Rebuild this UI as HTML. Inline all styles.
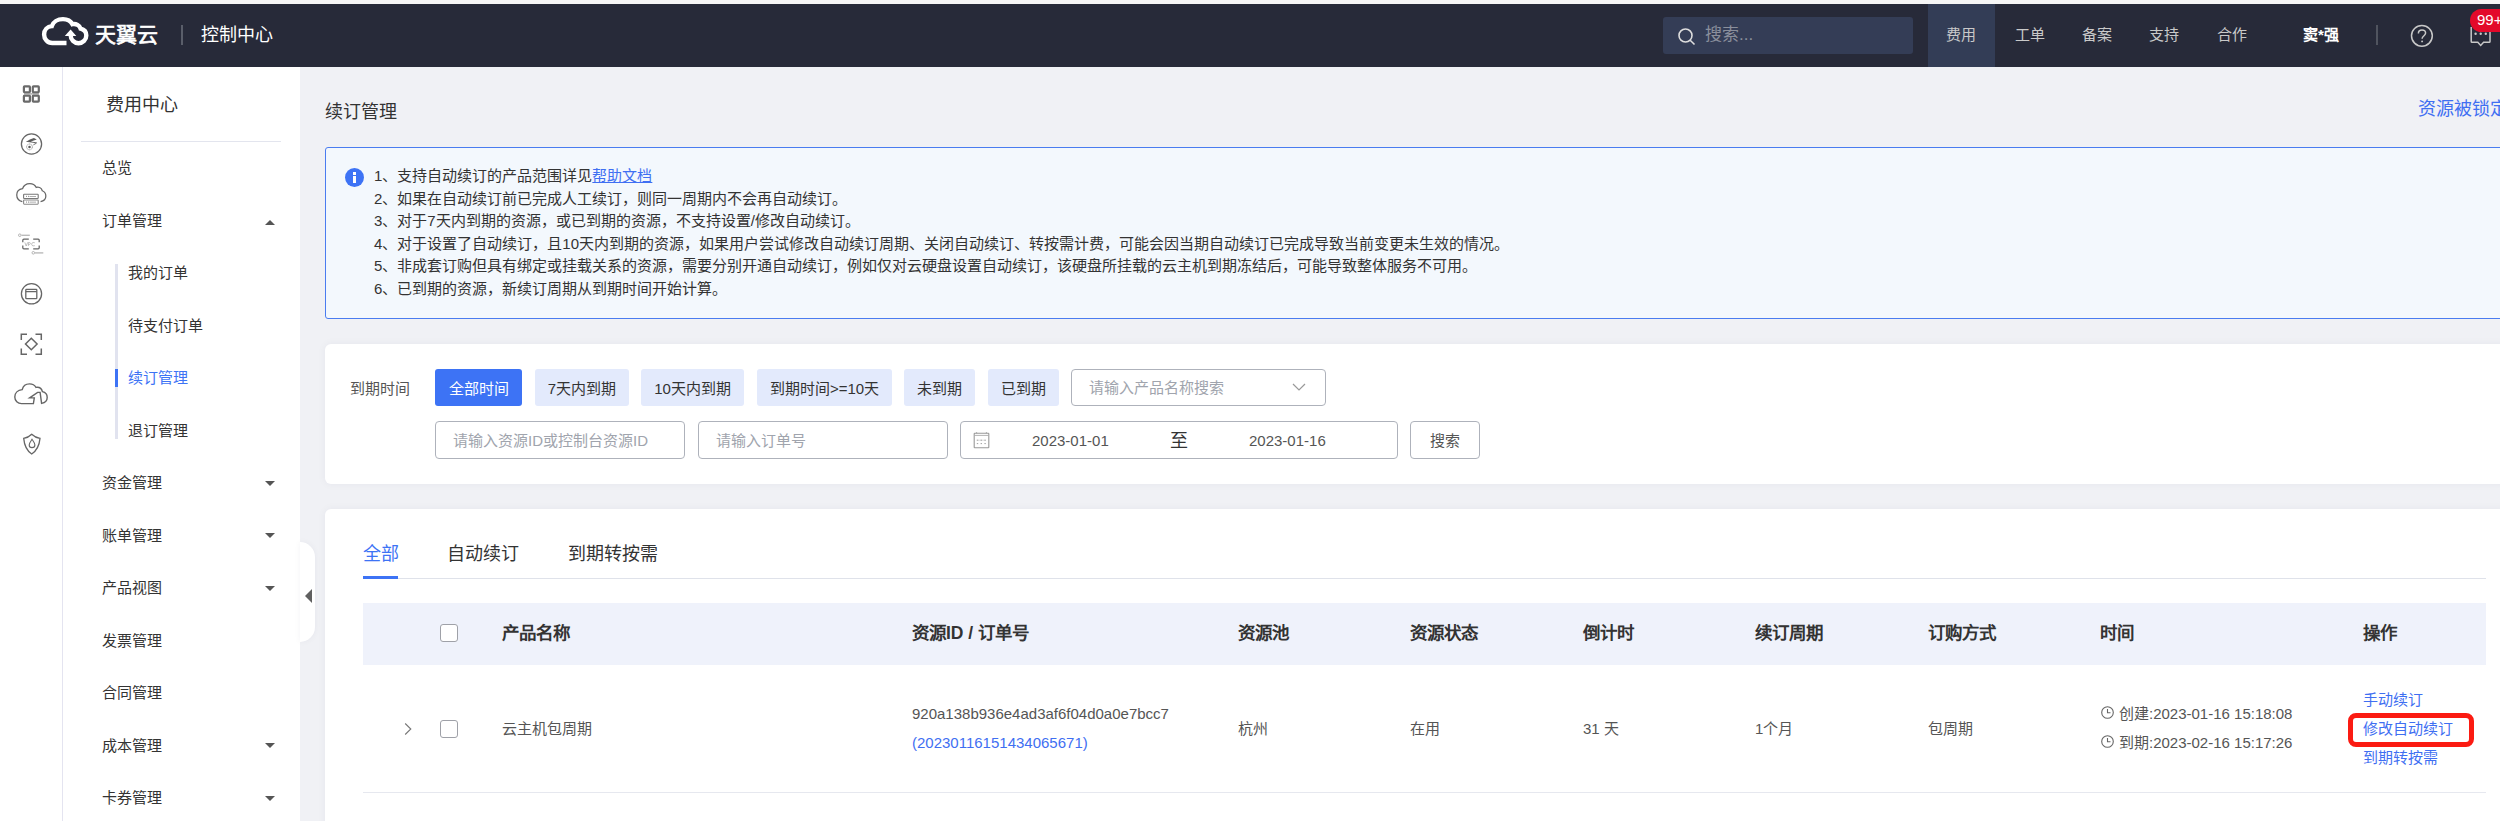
<!DOCTYPE html>
<html lang="zh-CN"><head><meta charset="utf-8">
<style>
*{box-sizing:border-box;margin:0;padding:0}
html,body{width:2500px;height:821px;overflow:hidden;background:#f0f1f5;font-family:"Liberation Sans",sans-serif;color:#333}
.a{position:absolute;white-space:nowrap}
#strip{left:0;top:0;width:2500px;height:4px;background:#f6f6f6}
#hdr{left:0;top:4px;width:2500px;height:63px;background:#272a39}
#iconbar{left:0;top:67px;width:63px;height:754px;background:#fff;border-right:1px solid #e4e4f0}
#side{left:63px;top:67px;width:237px;height:754px;background:#fff}
.nav{font-size:15px;line-height:20px;color:#c9c9c9}
.menu{font-size:15px;line-height:20px;color:#333}
.caret{width:0;height:0;border-left:5px solid transparent;border-right:5px solid transparent;border-top:5px solid #555}
.caretup{width:0;height:0;border-left:5px solid transparent;border-right:5px solid transparent;border-bottom:5px solid #555}
.card{background:#fff;border-radius:6px;box-shadow:0 0 8px rgba(30,40,80,0.05)}
.fbtn{height:37px;top:369px;border-radius:3px;background:#e3eafc;font-size:15px;line-height:39px;text-align:center;color:#333}
.inp{height:38px;top:421px;border:1px solid #aeb2bb;border-radius:4px;background:#fff;font-size:15px;line-height:38px;color:#a0a4ad}
.th{font-size:17.5px;font-weight:bold;line-height:20px;color:#333;top:623px}
.td{font-size:15px;line-height:20px;color:#555}
.link{color:#3f6ff2}
</style></head><body>
<div id="strip" class="a"></div>
<div id="hdr" class="a">
</div>
<div id="iconbar" class="a"></div>
<div id="side" class="a"></div>

<!-- header content -->
<svg class="a" style="left:0;top:0" width="100" height="60" viewBox="0 0 100 60"><path d="M66.5 43 H52.2 C47.6 43 44.1 39.2 44.1 34.5 C44.1 29.9 47.4 26.4 51.8 26.1 C53.2 21.9 57.7 19.1 63 19.1 C67.4 19.1 70.8 21.2 72.4 24.2 C76 23.4 79.6 25.4 80.6 28.6 C84 29.4 86.3 32 86.3 35.4 A7.8 7.8 0 0 1 70.7 35.4" fill="none" stroke="#fff" stroke-width="4.4"/><path d="M70.6 29.4 L64.8 36 L76.3 36 Z" fill="#fff"/></svg>
<div class="a" style="left:95px;top:23px;font-size:21px;line-height:24px;color:#fff;-webkit-text-stroke:0.6px #fff">天翼云</div>
<div class="a" style="left:181px;top:25px;width:2px;height:20px;background:#5a5e6a"></div>
<div class="a" style="left:201px;top:24px;font-size:18px;line-height:22px;color:#fff">控制中心</div>

<div class="a" style="left:1663px;top:17px;width:250px;height:37px;background:#343d56;border-radius:3px"></div>
<div class="a" style="left:1678px;top:28px;width:18px;height:18px">
<svg width="18" height="18" viewBox="0 0 18 18"><circle cx="7.5" cy="7.5" r="6.5" fill="none" stroke="#ddd" stroke-width="1.6"/><path d="M12.2 12.2 L16.5 16.5" stroke="#ddd" stroke-width="1.6"/></svg>
</div>
<div class="a" style="left:1705px;top:24px;font-size:17px;line-height:22px;color:#8a8f9c">搜索...</div>
<div class="a" style="left:1928px;top:4px;width:67px;height:63px;background:#333d56"></div>
<div class="a nav" style="left:1946px;top:25px">费用</div>
<div class="a nav" style="left:2015px;top:25px">工单</div>
<div class="a nav" style="left:2082px;top:25px">备案</div>
<div class="a nav" style="left:2149px;top:25px">支持</div>
<div class="a nav" style="left:2217px;top:25px">合作</div>
<div class="a nav" style="left:2303px;top:25px;color:#fff;font-weight:bold">窦*强</div>
<div class="a" style="left:2376px;top:25px;width:2px;height:20px;background:#50545f"></div>
<svg class="a" style="left:2400px;top:0" width="100" height="60" viewBox="0 0 100 60">
<circle cx="21.9" cy="35.8" r="10.4" fill="none" stroke="#c8c8c8" stroke-width="1.5"/>
<path d="M18.4 33.4 C18.4 31.3 20 30 22 30 C24 30 25.6 31.3 25.6 33.1 C25.6 35.6 22.1 35.9 22.1 38.8" fill="none" stroke="#c8c8c8" stroke-width="1.5"/>
<circle cx="22.1" cy="41.4" r="0.95" fill="#c8c8c8"/>
<path d="M71.2 27 V41.5 Q71.2 42.3 72 42.3 H77.8 L80.7 45.4 L83.6 42.3 H89.2 Q90 42.3 90 41.5 V27" fill="none" stroke="#c8c8c8" stroke-width="1.5"/>
<circle cx="75.6" cy="33.7" r="1.2" fill="#c8c8c8"/><circle cx="80.7" cy="33.7" r="1.2" fill="#c8c8c8"/><circle cx="85.8" cy="33.7" r="1.2" fill="#c8c8c8"/>
</svg>
<div class="a" style="left:2470px;top:9px;width:50px;height:23px;background:#e3092a;border-radius:12px"></div>
<div class="a" style="left:2477px;top:9px;color:#fff;font-size:15px;line-height:21px">99+</div>

<!-- sidebar -->
<div class="a" style="left:106px;top:93.5px;font-size:18px;line-height:22px;color:#333">费用中心</div>
<div class="a" style="left:81px;top:141px;width:200px;height:1px;background:#e3e5ee"></div>
<div class="a menu" style="left:102px;top:158.2px">总览</div>
<div class="a menu" style="left:102px;top:210.7px">订单管理</div>
<div class="a caretup" style="left:265px;top:220px"></div>
<div class="a" style="left:115px;top:264px;width:3px;height:175px;background:#e1e3ef"></div>
<div class="a" style="left:115px;top:369px;width:3px;height:18px;background:#3d73f5"></div>
<div class="a menu" style="left:128px;top:263.2px">我的订单</div>
<div class="a menu" style="left:128px;top:315.7px">待支付订单</div>
<div class="a menu" style="left:128px;top:368.2px;color:#3d73f5">续订管理</div>
<div class="a menu" style="left:128px;top:420.7px">退订管理</div>
<div class="a menu" style="left:102px;top:473.2px">资金管理</div>
<div class="a caret" style="left:265px;top:480.7px"></div>
<div class="a menu" style="left:102px;top:525.7px">账单管理</div>
<div class="a caret" style="left:265px;top:533.2px"></div>
<div class="a menu" style="left:102px;top:578.2px">产品视图</div>
<div class="a caret" style="left:265px;top:585.7px"></div>
<div class="a menu" style="left:102px;top:630.7px">发票管理</div>
<div class="a menu" style="left:102px;top:683.2px">合同管理</div>
<div class="a menu" style="left:102px;top:735.7px">成本管理</div>
<div class="a caret" style="left:265px;top:743.2px"></div>
<div class="a menu" style="left:102px;top:788.2px">卡券管理</div>
<div class="a caret" style="left:265px;top:795.7px"></div>

<!-- collapse tab -->
<div class="a" style="left:300px;top:542px;width:15px;height:100px;background:#fff;border-radius:0 15px 15px 0;box-shadow:0 0 6px rgba(30,40,80,0.05)"></div>
<div class="a" style="left:305px;top:589px;width:0;height:0;border-top:7px solid transparent;border-bottom:7px solid transparent;border-right:7px solid #606060"></div>

<!-- content -->
<div class="a" style="left:325px;top:100.5px;font-size:18px;line-height:22px;color:#333">续订管理</div>
<div class="a link" style="left:2418px;top:97.5px;font-size:18px;line-height:22px">资源被锁定</div>

<div class="a" style="left:325px;top:147px;width:2200px;height:172px;background:#f3f8fd;border:1px solid #4a7cf0;border-radius:3px"></div>
<div class="a" style="left:345px;top:168px;width:19px;height:19px;border-radius:50%;background:#3d73f5"></div>
<div class="a" style="left:353px;top:172px;width:3px;height:3px;background:#fff"></div>
<div class="a" style="left:353px;top:176px;width:3px;height:7px;background:#fff"></div>
<div class="a" style="left:374px;top:165px;font-size:15px;line-height:22.5px;color:#333">1、支持自动续订的产品范围详见<span class="link" style="text-decoration:underline">帮助文档</span><br>2、如果在自动续订前已完成人工续订，则同一周期内不会再自动续订。<br>3、对于7天内到期的资源，或已到期的资源，不支持设置/修改自动续订。<br>4、对于设置了自动续订，且10天内到期的资源，如果用户尝试修改自动续订周期、关闭自动续订、转按需计费，可能会因当期自动续订已完成导致当前变更未生效的情况。<br>5、非成套订购但具有绑定或挂载关系的资源，需要分别开通自动续订，例如仅对云硬盘设置自动续订，该硬盘所挂载的云主机到期冻结后，可能导致整体服务不可用。<br>6、已到期的资源，新续订周期从到期时间开始计算。</div>

<!-- filter card -->
<div class="a card" style="left:325px;top:344px;width:2200px;height:140px"></div>
<div class="a" style="left:350px;top:379px;font-size:15px;line-height:20px;color:#555">到期时间</div>
<div class="a fbtn" style="left:435px;width:87px;background:#3d73f5;color:#fff">全部时间</div>
<div class="a fbtn" style="left:535px;width:94px">7天内到期</div>
<div class="a fbtn" style="left:641px;width:103px">10天内到期</div>
<div class="a fbtn" style="left:757px;width:135px">到期时间&gt;=10天</div>
<div class="a fbtn" style="left:904px;width:71px">未到期</div>
<div class="a fbtn" style="left:988px;width:71px">已到期</div>
<div class="a inp" style="left:1071px;top:369px;width:255px;height:37px;padding-left:17px;line-height:36px">请输入产品名称搜索</div>
<div class="a" style="left:1292px;top:380px;width:14px;height:14px">
<svg width="14" height="14" viewBox="0 0 14 14"><path d="M1 4 L7 10 L13 4" fill="none" stroke="#999" stroke-width="1.2"/></svg>
</div>
<div class="a inp" style="left:435px;width:250px;padding-left:17px">请输入资源ID或控制台资源ID</div>
<div class="a inp" style="left:698px;width:250px;padding-left:17px">请输入订单号</div>
<div class="a inp" style="left:960px;width:438px;color:#555"></div>
<svg class="a" style="left:973px;top:431px" width="17" height="18" viewBox="0 0 17 18"><rect x="1.2" y="2.3" width="14.6" height="14.4" rx="0.5" fill="none" stroke="#999" stroke-width="1.1"/><path d="M1.2 4.4 H15.8 M3.6 1 V3 M13.4 1 V3" stroke="#aaa" stroke-width="0.9"/><g fill="#aaa"><rect x="3.8" y="8.7" width="1.4" height="1.1"/><rect x="7.6" y="8.7" width="1.4" height="1.1"/><rect x="11.4" y="8.7" width="1.4" height="1.1"/><rect x="3.8" y="12" width="1.4" height="1.1"/><rect x="7.6" y="12" width="1.4" height="1.1"/><rect x="11.4" y="12" width="1.4" height="1.1"/></g><path d="M3.8 9.2 H12.8" stroke="#bbb" stroke-width="0.5"/></svg>
<div class="a" style="left:1032px;top:431px;font-size:15px;line-height:20px;color:#555">2023-01-01</div>
<div class="a" style="left:1170px;top:430px;font-size:18px;line-height:22px;color:#333">至</div>
<div class="a" style="left:1249px;top:431px;font-size:15px;line-height:20px;color:#555">2023-01-16</div>
<div class="a inp" style="left:1410px;width:70px;text-align:center;color:#555">搜索</div>

<!-- table card -->
<div class="a card" style="left:325px;top:509px;width:2200px;height:330px"></div>
<div class="a" style="left:363px;top:543px;font-size:18px;line-height:22px;color:#3d73f5">全部</div>
<div class="a" style="left:447px;top:543px;font-size:18px;line-height:22px;color:#333">自动续订</div>
<div class="a" style="left:568px;top:543px;font-size:18px;line-height:22px;color:#333">到期转按需</div>
<div class="a" style="left:363px;top:578px;width:2123px;height:1px;background:#dfe2ea"></div>
<div class="a" style="left:363px;top:576px;width:35px;height:3px;background:#3d73f5"></div>

<div class="a" style="left:363px;top:603px;width:2123px;height:62px;background:#eff2fb"></div>
<div class="a" style="left:440px;top:624px;width:18px;height:18px;border:1px solid #9fa1a8;border-radius:3px;background:#fff"></div>
<div class="a th" style="left:502px">产品名称</div>
<div class="a th" style="left:912px">资源ID / 订单号</div>
<div class="a th" style="left:1238px">资源池</div>
<div class="a th" style="left:1410px">资源状态</div>
<div class="a th" style="left:1583px">倒计时</div>
<div class="a th" style="left:1755px">续订周期</div>
<div class="a th" style="left:1928px">订购方式</div>
<div class="a th" style="left:2100px">时间</div>
<div class="a th" style="left:2363px">操作</div>

<div class="a" style="left:403px;top:722px;width:10px;height:14px">
<svg width="10" height="14" viewBox="0 0 10 14"><path d="M2.2 1.5 L7.8 7 L2.2 12.5" fill="none" stroke="#777" stroke-width="1.1"/></svg>
</div>
<div class="a" style="left:440px;top:720px;width:18px;height:18px;border:1px solid #9fa1a8;border-radius:3px;background:#fff"></div>
<div class="a td" style="left:502px;top:719px">云主机包周期</div>
<div class="a td" style="left:912px;top:704px">920a138b936e4ad3af6f04d0a0e7bcc7</div>
<div class="a td link" style="left:912px;top:733px">(20230116151434065671)</div>
<div class="a td" style="left:1238px;top:719px">杭州</div>
<div class="a td" style="left:1410px;top:719px">在用</div>
<div class="a td" style="left:1583px;top:719px">31 天</div>
<div class="a td" style="left:1755px;top:719px">1个月</div>
<div class="a td" style="left:1928px;top:719px">包周期</div>
<div class="a" style="left:2101px;top:705px;width:13px;height:13px">
<svg width="13" height="13" viewBox="0 0 13 13"><circle cx="6.5" cy="6.5" r="5.8" fill="none" stroke="#666" stroke-width="1.1"/><path d="M6.5 3 V6.8 H9.5" fill="none" stroke="#666" stroke-width="1.1"/></svg>
</div>
<div class="a td" style="left:2119px;top:704px">创建:2023-01-16 15:18:08</div>
<div class="a" style="left:2101px;top:734px;width:13px;height:13px">
<svg width="13" height="13" viewBox="0 0 13 13"><circle cx="6.5" cy="6.5" r="5.8" fill="none" stroke="#666" stroke-width="1.1"/><path d="M6.5 3 V6.8 H9.5" fill="none" stroke="#666" stroke-width="1.1"/></svg>
</div>
<div class="a td" style="left:2119px;top:733px">到期:2023-02-16 15:17:26</div>
<div class="a td link" style="left:2363px;top:690px">手动续订</div>
<div class="a td link" style="left:2363px;top:719px">修改自动续订</div>
<div class="a td link" style="left:2363px;top:748px">到期转按需</div>
<div class="a" style="left:2348px;top:713px;width:126px;height:34px;border:5px solid #fb1b12;border-radius:8px"></div>
<div class="a" style="left:363px;top:792px;width:2123px;height:1px;background:#e6e8ef"></div>

<!-- icon bar icons -->
<svg class="a" style="left:0;top:0" width="63" height="470" viewBox="0 0 63 470">
<g fill="none" stroke="#6a6a6a" stroke-width="2.2"><rect x="23.9" y="86.3" width="6" height="6" rx="0.7"/><rect x="32.8" y="86.3" width="6" height="6" rx="0.7"/><rect x="23.9" y="95.6" width="6" height="6" rx="0.7"/><rect x="32.8" y="95.6" width="6" height="6" rx="0.7"/></g><path d="M24 93.9 H39" stroke="#999" stroke-width="1.2"/>
<g fill="none" stroke="#666" stroke-width="1.3">
<circle cx="31.5" cy="144" r="10.1"/>
<circle cx="31.5" cy="293.8" r="10.1"/>
<rect x="25.8" y="289.4" width="11" height="9.3" rx="0.6"/>
<path d="M25.8 291.6 H36.8"/>
<path d="M7 19.5 C3.5 18.5 1.2 15.8 1.2 12.6 C1.2 9.3 3.6 6.7 7.2 6.2 C8.3 3 11.3 1 14.8 1 C17.6 1 20.2 2.5 21.5 4.9 C24.3 4.2 27 5.8 27.8 8.3 C30.2 9.2 31.5 11.3 31.5 13.8 C31.5 16.8 29.2 19 26 19.5" transform="translate(15.6,182.6) scale(0.96,0.98)"/>
<rect x="23.6" y="194.3" width="14.6" height="4.2" rx="0.6" stroke="#777" stroke-width="1.1"/>
<rect x="23.6" y="200" width="14.6" height="4.2" rx="0.6" stroke="#888" stroke-width="1.1"/>
<path d="M22.8 242.3 V240.2 Q22.8 239.1 23.9 239.1 H28.8 M33.2 239.1 H38.2 Q39.2 239.1 39.2 240.2 V242.3 M22.8 245.6 V247.8 Q22.8 248.9 23.9 248.9 H28.8 M33.2 248.9 H38.2 Q39.2 248.9 39.2 247.8 V245.6" stroke-width="1.25"/>
<path d="M21.3 339.9 V334.2 H27 M35.5 334.2 H41.3 V339.9 M21.3 348.5 V354.2 H27 M35.5 354.2 H41.3 V348.5" stroke-width="1.5"/>
<path d="M31.3 338.2 L37.1 344 L31.3 349.8 L25.5 344 Z" stroke-width="1.5"/>
<path d="M21.5 403.6 H33.4 L34.3 397.9 H29.6 L37.6 392.4 H40.1 L41.6 403.4 C45 402.6 47.2 400.4 47.2 397.4 C47.2 394.3 45.2 392.2 42.4 391.6 C41.8 388.9 39.7 387.2 37.3 387.2 C36.9 387.2 36.4 387.3 36 387.4 C34.7 385.1 32.2 383.9 29.5 383.9 C25.9 383.9 23 386.3 22.2 389.6 C17.8 390.1 14.8 393.1 14.8 397 C14.8 400.7 17.8 403.6 21.5 403.6 Z" stroke-width="1.4"/>
<path d="M31.7 434.3 C29.5 436.5 26.8 438 23.7 438.4 C24.3 445 26.8 450.8 31.7 454 C36.6 450.8 39.4 445 40 438.4 C36.8 438 34 436.5 31.7 434.3 Z" stroke-width="1.3"/>
<path d="M32 439.3 C30.5 441.5 29.2 443.2 29.2 444.9 C29.2 446.5 30.4 447.6 32 447.6 C33.6 447.6 34.9 446.5 34.9 444.9 C34.9 443.2 33.5 441.5 32 439.3 Z" stroke-width="1.1"/>
</g>
<path d="M25.8 141.7 C28.5 140.2 31.2 138.6 33.9 137.9 L36.8 139.4 C34.8 139.9 32.8 140.6 30.8 141.5 L37.1 142.5 L36 143.9 C35.2 143.5 34.3 143.1 33.4 142.8 C31 142.4 28.4 142.1 25.8 141.7 Z" fill="#5e5e5e"/>
<circle cx="29.5" cy="146.9" r="1.25" fill="#555"/>
<circle cx="29.5" cy="146.9" r="2.9" fill="none" stroke="#888" stroke-width="0.9" stroke-dasharray="1.2 0.6"/>
<path d="M33.3 144.9 L35.6 143.8" stroke="#777" stroke-width="0.9"/>
<g fill="none" stroke="#999" stroke-width="0.6">
<path d="M24.8 242.4 L26.2 246 L27.6 242.4 M28.4 246 V242.5 H29.6 C30.6 242.5 30.6 244.4 29.6 244.4 H28.4 M34.8 242.8 C34 242.3 31.6 242.3 31.6 244.2 C31.6 246.1 34 246.1 34.8 245.6"/>
</g>
<g fill="none" stroke="#999" stroke-width="0.7"><circle cx="19.8" cy="235.2" r="1.3"/><circle cx="33.3" cy="252.8" r="1.3"/></g><g fill="#bbb"><rect x="21.5" y="234.6" width="8.3" height="1.4"/><rect x="35" y="252.2" width="8.3" height="1.4"/></g>
<g fill="#999"><rect x="26" y="195.8" width="1" height="1.2"/><rect x="28" y="195.8" width="1" height="1.2"/><rect x="29.5" y="196" width="6.5" height="0.8"/><rect x="26" y="201.5" width="1" height="1.2"/><rect x="28" y="201.5" width="1" height="1.2"/><rect x="29.5" y="201.7" width="6.5" height="0.8"/></g>
</svg>
</body></html>
